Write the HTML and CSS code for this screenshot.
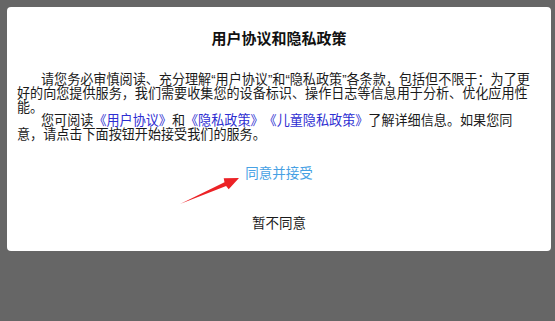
FILE: index.html
```html
<!DOCTYPE html>
<html lang="zh-CN">
<head>
  <meta charset="UTF-8">
  <meta name="viewport" content="width=device-width, initial-scale=1">
  <title>用户协议和隐私政策</title>
  <link rel="stylesheet" href="styles.css">
</head>
<body>
  <div class="dialog">
    <h1 class="dialog-title">用户协议和隐私政策</h1>
    <div class="dialog-text">
      <p>请您务必审慎阅读、充分理解“用户协议”和“隐私政策”各条款，包括但不限于：为了更好的向您提供服务，我们需要收集您的设备标识、操作日志等信息用于分析、优化应用性能。</p>
      <p>您可阅读<a href="#">《用户协议》</a>和<a href="#">《隐私政策》</a><a href="#">《儿童隐私政策》</a>了解详细信息。如果您同意，请点击下面按钮开始接受我们的服务。</p>
    </div>
    <button class="btn btn-accept">同意并接受</button>
    <button class="btn btn-decline">暂不同意</button>

    <!-- red pointer arrow drawn over the dialog -->
    <svg class="arrow" width="70" height="40" viewBox="175 170 70 40">
      <polygon points="180,204 224.5,182.3 223.7,178.2 239,178 228.7,189.2 226.1,185.9" fill="#ec2226"/>
    </svg>
  </div>
</body>
</html>
```
FILE: styles.css
```css
body {
  background-color: #666;
  margin: 0;
  padding: 7px 4px 0 7px;
  font-family: "Liberation Sans", "Noto Sans CJK SC", sans-serif;
  color: #1a1a1a;
}

.dialog {
  position: relative;
  background-color: #fff;
  border-radius: 4px;
  height: 244px;
  box-sizing: border-box;
  padding-top: 22px;
  display: flex;
  flex-direction: column;
}

.dialog-title {
  margin: 0;
  font-size: 15px;
  line-height: 20px;
  font-weight: bold;
  text-align: center;
  color: #111;
}

.dialog-text {
  margin: 24px 0 0 10px;
  width: 516px;
  font-size: 13.1px;
  line-height: 13.75px;
  text-spacing-trim: space-all;
}

.dialog-text p {
  margin: 0;
  text-indent: 24px;
}

.dialog-text a {
  color: #2e2ed2;
  text-decoration: none;
}

.btn {
  display: block;
  width: 100%;
  height: 40px;
  border: none;
  background: transparent;
  font-family: inherit;
  font-size: 13.5px;
  cursor: pointer;
  padding: 0;
}

.btn-accept {
  margin-top: 10px;
  color: #47a1e4;
}

.btn-decline {
  margin-top: 10.5px;
  color: #1a1a1a;
}

/* arrow sits over the dialog, coordinates are page-relative minus dialog origin */
.arrow {
  position: absolute;
  left: 168px;
  top: 163px;
}
```
